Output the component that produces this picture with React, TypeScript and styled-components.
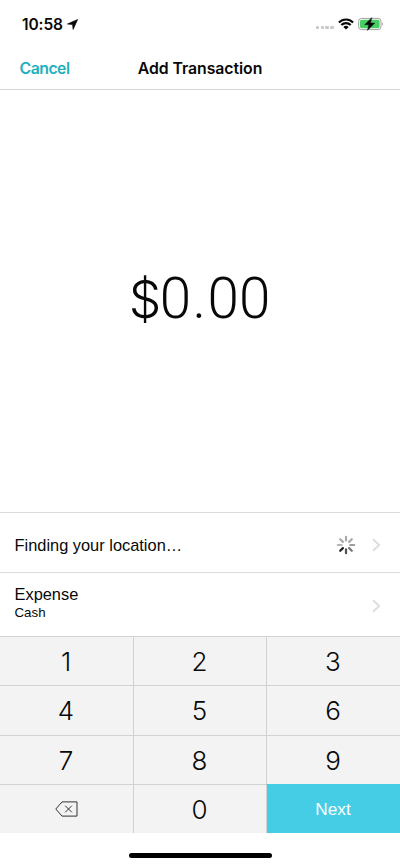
import React from "react";
import styled, { createGlobalStyle } from "styled-components";

const GlobalStyle = createGlobalStyle`
  * { box-sizing: border-box; }
  body { margin: 0; background: #fff; color: #080808; font-family: "Liberation Sans", Arial, sans-serif; }
  button { border: 0; margin: 0; padding: 0; background: none; color: inherit; font: inherit; }
`;

const Screen = styled.main`
  display: flex;
  flex-direction: column;
  width: 400px;
  height: 866px;
  background: #fff;
  overflow: hidden;
`;

const StatusBar = styled.div`
  display: flex;
  align-items: center;
  justify-content: space-between;
  height: 48px;
  padding: 1px 16px 0 22px;
`;

const Clock = styled.div`
  display: flex;
  align-items: center;
  gap: 4px;
  font: 600 15.5px/20px Inter, sans-serif;
  letter-spacing: -0.1px;
`;

const StatusIcons = styled.div`
  display: flex;
  align-items: center;
  gap: 4px;
  padding-bottom: 2px;
`;

const Dots = styled.div`
  display: flex;
  gap: 1.2px;
  padding-top: 8px;
`;

const Dot = styled.i`
  width: 3.7px;
  height: 3.8px;
  border-radius: 1px;
  background: #c9c9c9;
`;

const NavBar = styled.header`
  display: grid;
  grid-template-columns: 1fr auto 1fr;
  align-items: center;
  height: 42px;
  padding: 0 19.5px;
  border-bottom: 1px solid #d6d6d6;
  font: 600 15.8px/20px Inter, sans-serif;
`;

const CancelButton = styled.button`
  justify-self: start;
  color: #1fb0bd;
  letter-spacing: -0.5px;
`;

const Title = styled.h1`
  margin: 0;
  font: inherit;
  letter-spacing: -0.05px;
`;

const AmountArea = styled.section`
  display: flex;
  align-items: center;
  justify-content: center;
  height: 422px;
  padding: 0 1px 4px 0;
`;

const Amount = styled.div`
  font: 300 56.5px/64px Roboto, sans-serif;
`;

const Currency = styled.span`
  font: 300 51.5px/64px Inter, sans-serif;
  letter-spacing: -1.6px;
`;

const Point = styled.span`
  padding: 0 1.5px 0 1.5px;
`;

const DetailRow = styled.div<{ $height: number }>`
  display: flex;
  align-items: center;
  justify-content: space-between;
  height: ${(p) => p.$height}px;
  padding: 4px 19px 0 14.5px;
  border-top: 1px solid #dcdcdc;
`;

const RowText = styled.div`
  display: flex;
  flex-direction: column;
  padding-bottom: 9px;
`;

const RowTitle = styled.span`
  font-size: 16.4px;
  line-height: 20px;
`;

const RowSubtitle = styled.span`
  padding-top: 1px;
  margin-bottom: -1px;
  font-size: 13.3px;
  line-height: 16px;
`;

const RowAside = styled.div`
  display: flex;
  align-items: center;
  gap: 16px;
`;

const Keypad = styled.div`
  display: grid;
  grid-template-columns: 133px 133px 134px;
  grid-template-rows: 49px 50px 49px 49px;
  height: 197px;
`;

const Key = styled.button<{ $first?: boolean }>`
  display: flex;
  align-items: center;
  justify-content: center;
  padding: 1px 1px 0 0;
  border-top: 1px solid #d2d2d2;
  border-left: ${(p) => (p.$first ? "0" : "1px")} solid #d2d2d2;
  background: #f3f3f3;
  font: 300 26px/32px Inter, sans-serif;
`;

const DeleteKey = styled(Key)`
  padding: 0;
`;

const NextKey = styled(Key)`
  padding-top: 0;
  border-top-color: #45cde5;
  background: #45cde5;
  color: #fff;
  font: 400 17.2px/20px "Liberation Sans", Arial, sans-serif;
`;

const HomeArea = styled.footer`
  display: flex;
  justify-content: center;
  height: 33px;
  padding-top: 20px;
`;

const HomeIndicator = styled.div`
  width: 143px;
  height: 5px;
  border-radius: 3px;
  background: #000;
`;

const LocationArrow = () => (
  <svg width="11" height="11" viewBox="0 0 11 11">
    <path d="M10.6.5 6.1 10.4 5.6 5.5.5 5Z" fill="#080808" stroke="#080808" strokeWidth=".7" strokeLinejoin="round" />
  </svg>
);

const Wifi = () => (
  <svg width="16" height="12" viewBox="0 0 16 12">
    <g fill="none" stroke="#080808" strokeWidth="2.1">
      <path d="M.9 4.5C4.8.4 11.2.4 15.1 4.5" />
      <path d="M3.3 7.1C6 4.4 10 4.4 12.7 7.1" />
    </g>
    <path d="M5.3 8.9Q8 6.7 10.7 8.9L8 11.6Z" fill="#080808" />
  </svg>
);

const Battery = () => (
  <svg width="26" height="14" viewBox="0 0 26 14">
    <rect x=".6" y="1.4" width="22.4" height="11.2" rx="3" fill="#fff" stroke="#a0a0a0" />
    <rect x="2" y="2.8" width="19.6" height="8.4" rx="1.6" fill="#45cf62" />
    <path d="M24.2 5Q26 7 24.2 9Z" fill="#999" />
    <path d="M13.9.6 6.6 7.8H10.8L9.4 13.4 16.8 6.1H12.5Z" fill="#080808" stroke="#080808" strokeWidth=".4" />
  </svg>
);

const spokeColors = ["#aaa", "#aaa", "#9c9c9c", "#777", "#505050", "#202020", "#b5b5b5", "#aaa"];

const Spinner = () => (
  <svg width="20" height="20" viewBox="0 0 20 20" strokeWidth="2.2" strokeLinecap="round">
    {spokeColors.map((color, i) => (
      <path key={i} d="M10 1.8V5.6" stroke={color} transform={`rotate(${i * 45} 10 10)`} />
    ))}
  </svg>
);

const Chevron = () => (
  <svg width="9" height="14" viewBox="0 0 9 14">
    <path d="m1.1 1.2 6 5.8-6 5.8" fill="none" stroke="#dedede" strokeWidth="2" />
  </svg>
);

const RowChevron = styled.span`
  display: flex;
  padding-bottom: 2px;
`;

const Backspace = () => (
  <svg width="23" height="16" viewBox="0 0 23 16" fill="none" stroke="#333" strokeWidth="1">
    <path d="M7 .9H22V15.1H7L.8 8ZM10.2 4.7l6.6 6.6M16.8 4.7l-6.6 6.6" />
  </svg>
);

const digits = ["1", "2", "3", "4", "5", "6", "7", "8", "9"];

export default function App() {
  return (
    <Screen>
      <GlobalStyle />
      <StatusBar>
        <Clock>10:58<LocationArrow /></Clock>
        <StatusIcons>
          <Dots><Dot /><Dot /><Dot /><Dot /></Dots>
          <Wifi />
          <Battery />
        </StatusIcons>
      </StatusBar>
      <NavBar>
        <CancelButton>Cancel</CancelButton>
        <Title>Add Transaction</Title>
      </NavBar>
      <AmountArea>
        <Amount><Currency>$</Currency>0<Point>.</Point>00</Amount>
      </AmountArea>
      <DetailRow $height={60}>
        <RowTitle>Finding your location…</RowTitle>
        <RowAside><Spinner /><Chevron /></RowAside>
      </DetailRow>
      <DetailRow $height={64}>
        <RowText>
          <RowTitle>Expense</RowTitle>
          <RowSubtitle>Cash</RowSubtitle>
        </RowText>
        <RowChevron><Chevron /></RowChevron>
      </DetailRow>
      <Keypad>
        {digits.map((digit, i) => (
          <Key key={digit} $first={i % 3 === 0}>{digit}</Key>
        ))}
        <DeleteKey $first aria-label="Delete"><Backspace /></DeleteKey>
        <Key>0</Key>
        <NextKey>Next</NextKey>
      </Keypad>
      <HomeArea><HomeIndicator /></HomeArea>
    </Screen>
  );
}
